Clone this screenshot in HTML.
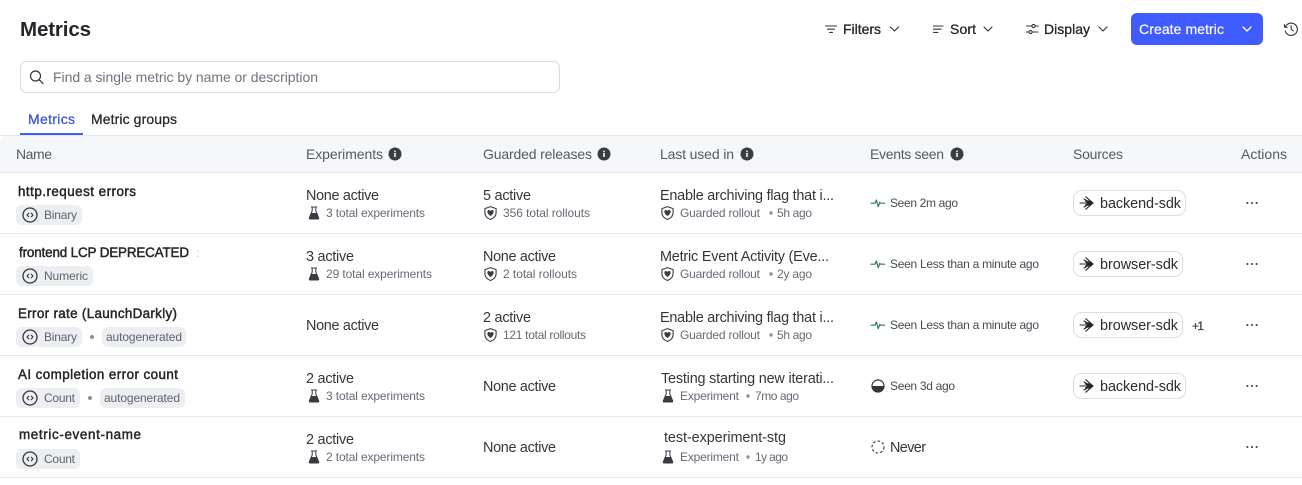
<!DOCTYPE html>
<html lang="en">
<head>
<meta charset="utf-8">
<title>Metrics</title>
<style>
html,body{margin:0;padding:0;background:#fff;width:1302px;height:485px;overflow:hidden}
svg{display:block}
text{font-family:"Liberation Sans",sans-serif;white-space:pre}
.t{font-size:14.4px;fill:#34363d}
.s{font-size:12px;fill:#666a75}
.e{font-size:12px;fill:#474a53}
.n{font-size:13.4px;fill:#23252a;stroke:#23252a;stroke-width:.45}
.h{font-size:14px;fill:#565a64}
.p{font-size:12px;fill:#5f636e}
.b{font-size:14px;fill:#23252a;stroke:#23252a;stroke-width:.3}
.k{font-size:14.4px;fill:#2a2c33}
.ic{fill:none;stroke:#33353c;stroke-width:1.1;stroke-linecap:round;stroke-linejoin:round}
</style>
</head>
<body>
<svg xmlns="http://www.w3.org/2000/svg" width="1302" height="485" viewBox="0 0 1302 485">
<defs>
<g id="flask"><path d="M-3-6H3M-1.8-6V-2L-4.6 4.6Q-5.1 6 -3.9 6H3.9Q5.1 6 4.6 4.6L1.8-2V-6" fill="none" stroke="#3a3c44" stroke-width="1" stroke-linejoin="round"/><path d="M-3 0H3L4.6 4.6Q5.1 6 3.9 6H-3.9Q-5.1 6 -4.6 4.6Z" fill="#3a3c44"/></g>
<g id="shield"><path d="M0-6.4L5.6-4.4V-.2C5.6 3.2 3 5.4 0 6.5C-3 5.4-5.6 3.2-5.6-.2V-4.4Z" fill="none" stroke="#3a3c44" stroke-width="1.1" stroke-linejoin="round"/><path d="M0 3C-4.2 .2-3.6-3-1.6-3Q-.5-3 0-2Q.5-3 1.6-3C3.6-3 4.2 .2 0 3Z" fill="#3a3c44"/></g>
<g id="code"><circle r="7" fill="none" stroke="#33353c" stroke-width="1.3"/><path d="M-1.3-1.8L-3 0L-1.3 1.8M1.3-1.8L3 0L1.3 1.8" fill="none" stroke="#33353c" stroke-width="1.1" stroke-linecap="round" stroke-linejoin="round"/></g>
<g id="ld"><path d="M-7 0H5M-1.2-6.2L6 0L-1.2 6.2M-3-4L4 0L-3 4M-1.5-2L2 0L-1.5 2" fill="none" stroke="#23252a" stroke-width="1.1" stroke-linejoin="round" stroke-linecap="round"/><path d="M1.2-3L6.8 0L1.2 3Z" fill="#23252a"/></g>
<g id="pulse"><path d="M-7 .2H-3L-1.6-3L.2 3.6L1.8-.6L2.4 .2H6.6" fill="none" stroke="#2f7d4f" stroke-width="1.2" stroke-linejoin="round" stroke-linecap="round"/></g>
<g id="info"><circle r="6.5" fill="#3a3c44"/><rect x="-.8" y="-1" width="1.6" height="4" fill="#f6f7f9"/><rect x="-.8" y="-3.3" width="1.6" height="1.5" fill="#f6f7f9"/></g>
<g id="chev"><path d="M-4-2L0 2L4-2" fill="none" stroke="#33353c" stroke-width="1.15" stroke-linecap="round" stroke-linejoin="round"/></g>
<g id="dots" fill="#33353c"><circle cx="-4.6" r="1"/><circle r="1"/><circle cx="4.6" r="1"/></g>
</defs>

<rect width="1302" height="485" fill="#fff"/>

<!-- top -->
<text x="20" y="36" font-size="20.5" font-weight="700" fill="#23252a" textLength="71">Metrics</text>

<path class="ic" d="M825.5 26H836.5M827.5 29.2H834.5M829.5 32.4H832.5"/>
<text class="b" x="843" y="34" textLength="38">Filters</text>
<use href="#chev" x="894.5" y="29"/>

<path class="ic" d="M933.5 26H943M933.5 29.2H941M933.5 32.4H938"/>
<text class="b" x="950" y="34" textLength="26">Sort</text>
<use href="#chev" x="988" y="29"/>

<path class="ic" d="M1026.5 26H1031.5M1035.5 26H1038M1026.5 32H1028.5M1032.5 32H1038"/>
<circle class="ic" cx="1033.5" cy="26" r="1.6"/><circle class="ic" cx="1030.5" cy="32" r="1.6"/>
<text class="b" x="1044" y="34" textLength="46">Display</text>
<use href="#chev" x="1103" y="29"/>

<rect x="1131" y="13" width="132" height="32" rx="6" fill="#405bff"/>
<text x="1139" y="34" font-size="14" fill="#fff" stroke="#fff" stroke-width=".2" textLength="85">Create metric</text>
<path d="M1243 27L1247 31L1251 27" fill="none" stroke="#fff" stroke-width="1.3" stroke-linecap="round" stroke-linejoin="round"/>

<path class="ic" d="M1285.6 26.5A6.2 6.2 0 1 1 1285.2 31M1284.5 24.5V27.2H1287.2M1291.2 25.8V29.3L1293.5 30.8"/>

<rect x="20.5" y="61.5" width="539" height="31" rx="6" fill="#fff" stroke="#d9dbe1"/>
<circle cx="35.5" cy="76" r="5" fill="none" stroke="#33353c" stroke-width="1.2"/>
<path d="M39.2 79.8L43 83.6" stroke="#33353c" stroke-width="1.2" stroke-linecap="round"/>
<text x="53" y="82" font-size="14" fill="#6f737e" textLength="265">Find a single metric by name or description</text>

<text x="28" y="124" font-size="14" fill="#3a50d8" stroke="#3a50d8" stroke-width=".25" textLength="47">Metrics</text>
<text x="91" y="124" font-size="14" fill="#23252a" stroke="#23252a" stroke-width=".25" textLength="86">Metric groups</text>

<!-- header -->
<path d="M0 144Q0 136 8 136H1302V172H0Z" fill="#f6f7f9"/>
<rect x="0" y="135" width="1302" height="1" fill="#e6e8ec"/>
<rect x="20" y="133" width="63" height="2" fill="#405bff"/>
<rect x="0" y="172" width="1302" height="1" fill="#e6e8ec"/>
<text class="h" x="16" y="159" textLength="36">Name</text>
<text class="h" x="306" y="159" textLength="77">Experiments</text>
<use href="#info" x="395" y="154"/>
<text class="h" x="483" y="159" textLength="109">Guarded releases</text>
<use href="#info" x="604" y="154"/>
<text class="h" x="660" y="159" textLength="74">Last used in</text>
<use href="#info" x="747" y="154"/>
<text class="h" x="870" y="159" textLength="74">Events seen</text>
<use href="#info" x="957" y="154"/>
<text class="h" x="1073" y="159" textLength="50">Sources</text>
<text class="h" x="1241" y="159" textLength="46">Actions</text>

<!-- row lines -->
<g fill="#e8e9ed">
<rect y="233" width="1302" height="1"/>
<rect y="294" width="1302" height="1"/>
<rect y="355" width="1302" height="1"/>
<rect y="416" width="1302" height="1"/>
<rect y="477" width="1302" height="1"/>
</g>

<!-- names -->
<text class="n" x="18" y="196" textLength="118">http.request errors</text>
<text class="n" x="19" y="257" textLength="170">frontend LCP DEPRECATED</text>
<text x="196" y="257" font-size="12" fill="#c9cbd2">:</text>
<text class="n" x="18" y="318" textLength="159">Error rate (LaunchDarkly)</text>
<text class="n" x="18" y="379" textLength="160">AI completion error count</text>
<text class="n" x="19" y="439" textLength="122">metric-event-name</text>

<!-- pills -->
<g fill="#eceef2">
<rect x="16" y="205" width="66" height="20" rx="6"/>
<rect x="16" y="266" width="77" height="20" rx="6"/>
<rect x="16" y="327" width="66" height="20" rx="6"/>
<rect x="102" y="327" width="84" height="20" rx="6"/>
<rect x="16" y="388" width="64" height="20" rx="6"/>
<rect x="100" y="388" width="85" height="20" rx="6"/>
<rect x="16" y="449" width="64" height="20" rx="6"/>
</g>
<use href="#code" x="30" y="215"/>
<use href="#code" x="30" y="276"/>
<use href="#code" x="30" y="337"/>
<use href="#code" x="30" y="398"/>
<use href="#code" x="30" y="459"/>
<text class="p" x="44" y="219" textLength="33">Binary</text>
<text class="p" x="44" y="280" textLength="44">Numeric</text>
<text class="p" x="44" y="341" textLength="33">Binary</text>
<circle cx="92" cy="337" r="2" fill="#8d909a"/>
<text class="p" x="106" y="341" textLength="76">autogenerated</text>
<text class="p" x="44" y="402" textLength="31">Count</text>
<circle cx="90" cy="398" r="2" fill="#8d909a"/>
<text class="p" x="104" y="402" textLength="76">autogenerated</text>
<text class="p" x="44" y="463" textLength="31">Count</text>

<!-- experiments -->
<text class="t" x="306" y="200" textLength="73">None active</text>
<use href="#flask" x="314" y="213"/>
<text class="s" x="326" y="217" textLength="99">3 total experiments</text>
<text class="t" x="306" y="261" textLength="48">3 active</text>
<use href="#flask" x="314" y="274"/>
<text class="s" x="326" y="278" textLength="106">29 total experiments</text>
<text class="t" x="306" y="330" textLength="73">None active</text>
<text class="t" x="306" y="383" textLength="48">2 active</text>
<use href="#flask" x="314" y="396"/>
<text class="s" x="326" y="400" textLength="99">3 total experiments</text>
<text class="t" x="306" y="444" textLength="48">2 active</text>
<use href="#flask" x="314" y="457"/>
<text class="s" x="326" y="461" textLength="99">2 total experiments</text>

<!-- guarded -->
<text class="t" x="483" y="200" textLength="48">5 active</text>
<use href="#shield" x="490.5" y="213"/>
<text class="s" x="503" y="217" textLength="87">356 total rollouts</text>
<text class="t" x="483" y="261" textLength="73">None active</text>
<use href="#shield" x="490.5" y="274"/>
<text class="s" x="503" y="278" textLength="74">2 total rollouts</text>
<text class="t" x="483" y="322" textLength="48">2 active</text>
<use href="#shield" x="490.5" y="335"/>
<text class="s" x="503" y="339" textLength="83">121 total rollouts</text>
<text class="t" x="483" y="391" textLength="73">None active</text>
<text class="t" x="483" y="452" textLength="73">None active</text>

<!-- last used -->
<text class="t" x="660" y="200" textLength="174">Enable archiving flag that i...</text>
<use href="#shield" x="667.5" y="213"/>
<text class="s" x="680" y="217" textLength="80">Guarded rollout</text>
<circle cx="771" cy="213" r="1.7" fill="#8d909a"/>
<text class="s" x="777" y="217" textLength="35">5h ago</text>

<text class="t" x="660" y="261" textLength="169">Metric Event Activity (Eve...</text>
<use href="#shield" x="667.5" y="274"/>
<text class="s" x="680" y="278" textLength="80">Guarded rollout</text>
<circle cx="771" cy="274" r="1.7" fill="#8d909a"/>
<text class="s" x="777" y="278" textLength="35">2y ago</text>

<text class="t" x="660" y="322" textLength="174">Enable archiving flag that i...</text>
<use href="#shield" x="667.5" y="335"/>
<text class="s" x="680" y="339" textLength="80">Guarded rollout</text>
<circle cx="771" cy="335" r="1.7" fill="#8d909a"/>
<text class="s" x="777" y="339" textLength="35">5h ago</text>

<text class="t" x="661" y="383" textLength="173">Testing starting new iterati...</text>
<use href="#flask" x="668" y="396"/>
<text class="s" x="680" y="400" textLength="59">Experiment</text>
<circle cx="748" cy="396" r="1.7" fill="#8d909a"/>
<text class="s" x="755" y="400" textLength="44">7mo ago</text>

<text class="t" x="664" y="442" textLength="122">test-experiment-stg</text>
<use href="#flask" x="668" y="457"/>
<text class="s" x="680" y="461" textLength="59">Experiment</text>
<circle cx="748" cy="457" r="1.7" fill="#8d909a"/>
<text class="s" x="755" y="461" textLength="33">1y ago</text>

<!-- events -->
<use href="#pulse" x="878" y="203"/>
<text class="e" x="890" y="207" textLength="68">Seen 2m ago</text>
<use href="#pulse" x="878" y="264"/>
<text class="e" x="890" y="268" textLength="149">Seen Less than a minute ago</text>
<use href="#pulse" x="878" y="325"/>
<text class="e" x="890" y="329" textLength="149">Seen Less than a minute ago</text>
<circle cx="878" cy="386" r="6" fill="none" stroke="#33353c" stroke-width="1.2"/>
<path d="M871.5 386H884.5A6.5 6.5 0 0 1 871.5 386Z" fill="#33353c"/>
<text class="e" x="890" y="390" textLength="65">Seen 3d ago</text>
<circle cx="878" cy="447" r="6" fill="none" stroke="#33353c" stroke-width="1.1" stroke-dasharray="2.6 2"/>
<text class="t" x="890" y="452" textLength="36">Never</text>

<!-- sources -->
<g fill="#fff" stroke="#dcdee3">
<rect x="1073.5" y="190.5" width="112" height="25" rx="8"/>
<rect x="1073.5" y="251.5" width="109" height="25" rx="8"/>
<rect x="1073.5" y="312.5" width="109" height="25" rx="8"/>
<rect x="1073.5" y="373.5" width="112" height="25" rx="8"/>
</g>
<use href="#ld" x="1087" y="203"/>
<use href="#ld" x="1087" y="264"/>
<use href="#ld" x="1087" y="325"/>
<use href="#ld" x="1087" y="386"/>
<text class="k" x="1100" y="208" textLength="81">backend-sdk</text>
<text class="k" x="1100" y="269" textLength="78">browser-sdk</text>
<text class="k" x="1100" y="330" textLength="78">browser-sdk</text>
<text class="k" x="1100" y="391" textLength="81">backend-sdk</text>
<text x="1192" y="330" font-size="12" fill="#41444d" stroke="#41444d" stroke-width=".3" textLength="12">+1</text>

<!-- actions -->
<use href="#dots" x="1252" y="203"/>
<use href="#dots" x="1252" y="264"/>
<use href="#dots" x="1252" y="325"/>
<use href="#dots" x="1252" y="386"/>
<use href="#dots" x="1252" y="447"/>
</svg>
</body>
</html>
